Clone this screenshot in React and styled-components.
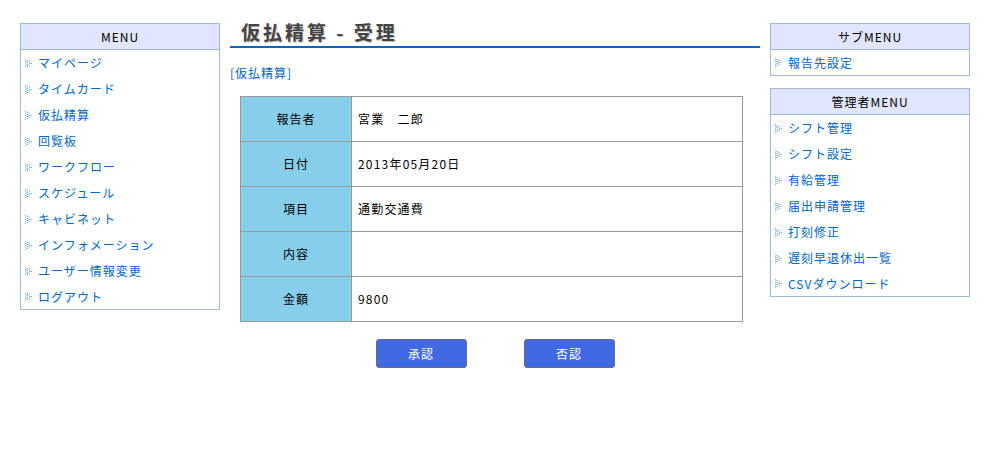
import React from "react";
import styled, { createGlobalStyle } from "styled-components";

const Global = createGlobalStyle`
  html, body { margin: 0; padding: 0; background: #fff; }
  body {
    font-family: "Noto Sans CJK JP", "Noto Sans", sans-serif;
    font-size: 12px;
    line-height: 1.3;
    color: #000;
  }
`;

const Page = styled.div`
  display: grid;
  grid-template-columns: 200px 530px 200px;
  column-gap: 10px;
  padding: 23px 0 0 20px;
  align-items: start;
`;

const Side = styled.div`
  display: flex;
  flex-direction: column;
  gap: 12px;
`;

const MenuBox = styled.div`
  border: 1px solid #a3b9d8;
  background: #fff;
`;

const MenuHead = styled.div`
  height: 25px;
  line-height: 25px;
  background: #e0e6fe;
  border-bottom: 1px solid #a3b9d8;
  text-align: center;
  font-size: 12px;
  letter-spacing: 1px;
  color: #000;
`;

const MenuItem = styled.a`
  display: flex;
  align-items: center;
  height: 26px;
  line-height: 14px;
  padding-left: 4px;
  gap: 5px;
  color: #0066cc;
  text-decoration: none;
  font-size: 12px;
  letter-spacing: 1px;
  &:last-child { height: 25px; }
`;

const Main = styled.div`
  display: flex;
  flex-direction: column;
`;

const Title = styled.h1`
  margin: -3px 0 0 0;
  padding: 0 0 0 11px;
  height: 26px;
  line-height: 24px;
  font-size: 19px;
  font-weight: bold;
  letter-spacing: 3px;
  color: #444;
  text-shadow: 1px 1px 1px #bbb;
  border-bottom: 2px solid #0066cc;
`;

const Crumb = styled.div`
  margin-top: 17px;
  color: #0066cc;
  font-size: 12px;
  letter-spacing: 1px;
`;

const Table = styled.table`
  margin: 15px 0 0 10px;
  width: 503px;
  border-collapse: collapse;
  border: 1px solid #999;
`;

const Th = styled.th`
  width: 110px;
  height: 44px;
  padding: 0;
  background: #87ceeb;
  border: 1px solid #999;
  font-weight: normal;
  font-size: 12px;
  letter-spacing: 1px;
  text-align: center;
`;

const Td = styled.td`
  border: 1px solid #999;
  padding: 0 6px;
  font-size: 12px;
  letter-spacing: 1.2px;
`;

const Buttons = styled.div`
  display: flex;
  justify-content: center;
  gap: 57px;
  margin-top: 17px;
`;

const Btn = styled.button`
  width: 91px;
  height: 29px;
  padding: 0;
  background: #4169e1;
  color: #fff;
  border: 1px solid #6b6b8a;
  border-radius: 3px;
  font-family: inherit;
  font-size: 12px;
  letter-spacing: 1px;
  cursor: pointer;
`;

const Arrow = () => (
  <svg width="8" height="9" viewBox="0 0 8 9">
    {[
      [0, 0], [0, 2], [0, 4], [0, 6], [0, 8],
      [2, 1], [2, 3], [2, 5], [2, 7],
      [4, 2], [4, 4], [4, 6],
      [6, 4],
    ].map(([x, y], i) => (
      <rect key={i} x={x} y={y} width="1" height="1" fill="#7fb4e6" />
    ))}
    {[[1, 1], [1, 3], [1, 5], [1, 7], [3, 3], [3, 5], [5, 4]].map(([x, y], i) => (
      <rect key={"b" + i} x={x} y={y} width="1" height="1" fill="#b8d6f2" />
    ))}
  </svg>
);

const Menu = ({ title, items }) => (
  <MenuBox>
    <MenuHead>{title}</MenuHead>
    {items.map((t) => (
      <MenuItem key={t} href="#">
        <Arrow />
        {t}
      </MenuItem>
    ))}
  </MenuBox>
);

const rows = [
  ["報告者", "宮業\u3000二郎"],
  ["日付", "2013年05月20日"],
  ["項目", "通勤交通費"],
  ["内容", ""],
  ["金額", "9800"],
];

export default function App() {
  return (
    <>
      <Global />
      <Page>
        <Side>
          <Menu
            title="MENU"
            items={[
              "マイページ",
              "タイムカード",
              "仮払精算",
              "回覧板",
              "ワークフロー",
              "スケジュール",
              "キャビネット",
              "インフォメーション",
              "ユーザー情報変更",
              "ログアウト",
            ]}
          />
        </Side>
        <Main>
          <Title>仮払精算 - 受理</Title>
          <Crumb>[仮払精算]</Crumb>
          <Table>
            <tbody>
              {rows.map(([k, v]) => (
                <tr key={k}>
                  <Th>{k}</Th>
                  <Td>{v}</Td>
                </tr>
              ))}
            </tbody>
          </Table>
          <Buttons>
            <Btn>承認</Btn>
            <Btn>否認</Btn>
          </Buttons>
        </Main>
        <Side>
          <Menu title="サブMENU" items={["報告先設定"]} />
          <Menu
            title="管理者MENU"
            items={[
              "シフト管理",
              "シフト設定",
              "有給管理",
              "届出申請管理",
              "打刻修正",
              "遅刻早退休出一覧",
              "CSVダウンロード",
            ]}
          />
        </Side>
      </Page>
    </>
  );
}
